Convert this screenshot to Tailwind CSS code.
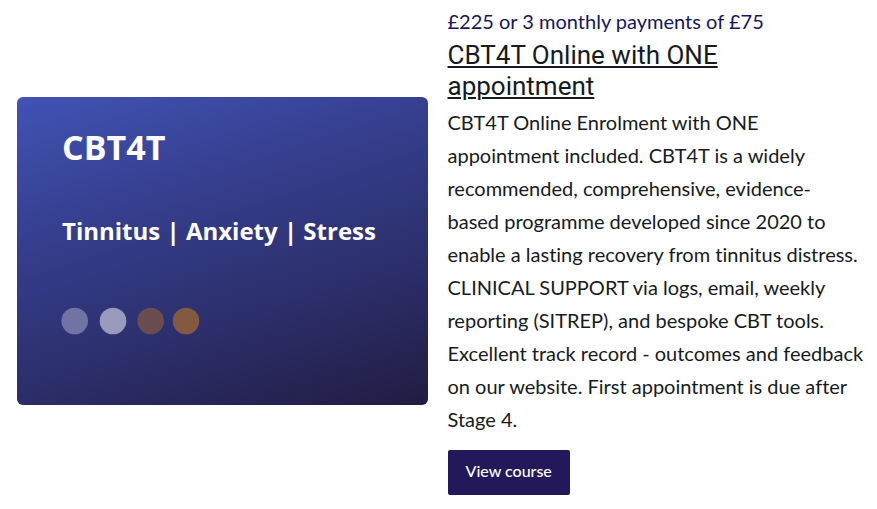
<!DOCTYPE html>
<html lang="en">

<head>
  <meta charset="UTF-8">
  <meta name="viewport" content="width=device-width, initial-scale=1.0">
  <title>CBT4T Online</title>
  <!-- Tailwind CSS -->
  <script src="https://cdn.jsdelivr.net/npm/@tailwindcss/browser@4"></script>
</head>

<body class="bg-white font-['Lato',sans-serif] text-[#151b22]">
  <article class="grid grid-cols-2 items-center gap-5 pr-[19px] pl-[17px] pt-[5px]">
    <!-- Course cover -->
    <div class="mt-[2px] flex aspect-[4/3] flex-col rounded-md bg-linear-[162deg,#4053b4_0%,#363f8f_33%,#2c2f6c_66%,#221c42_100%] pt-7 pl-[45px] font-['Open_Sans',sans-serif] font-bold text-white">
      <p class="text-[34px] leading-[44px]">CBT4T</p>
      <p class="mt-[46px] text-[24px] leading-8 whitespace-nowrap">Tinnitus | Anxiety | Stress</p>
      <svg class="mt-[60px] overflow-visible" width="140" height="28" viewBox="0 0 140 28" aria-hidden="true">
        <circle cx="12.7" cy="14" r="13.3" fill="#7073a3" />
        <circle cx="51" cy="14" r="13.3" fill="#999bbd" />
        <circle cx="88.7" cy="14" r="13.3" fill="#6b4d4f" />
        <circle cx="124" cy="14" r="13.3" fill="#835940" />
      </svg>
    </div>

    <!-- Course details -->
    <div>
      <p class="text-[20px] leading-[33px] text-[#17155f]">£225 or 3 monthly payments of £75</p>
      <h2 class="mt-[2px] font-['Roboto',sans-serif] text-[26px] leading-[31px]">
        <a href="#" class="underline decoration-2 underline-offset-2">CBT4T Online with ONE appointment</a>
      </h2>
      <p class="mt-1 -mr-2 text-[20px] leading-[33px] [font-variant-ligatures:none]">
        CBT4T Online Enrolment with ONE appointment included. CBT4T is a widely recommended, comprehensive, evidence-<br>based programme developed since 2020 to<br>
        enable a lasting recovery from tinnitus distress. CLINICAL SUPPORT via logs, email, weekly reporting (SITREP), and bespoke CBT tools. Excellent track record - outcomes and feedback on our website. First appointment is due after Stage 4.
      </p>
      <button type="button" class="mt-[14px] h-[45px] rounded-xs bg-[#23195a] px-[18px] pb-1 text-[16px] font-medium text-white">View course</button>
    </div>
  </article>
</body>

</html>
